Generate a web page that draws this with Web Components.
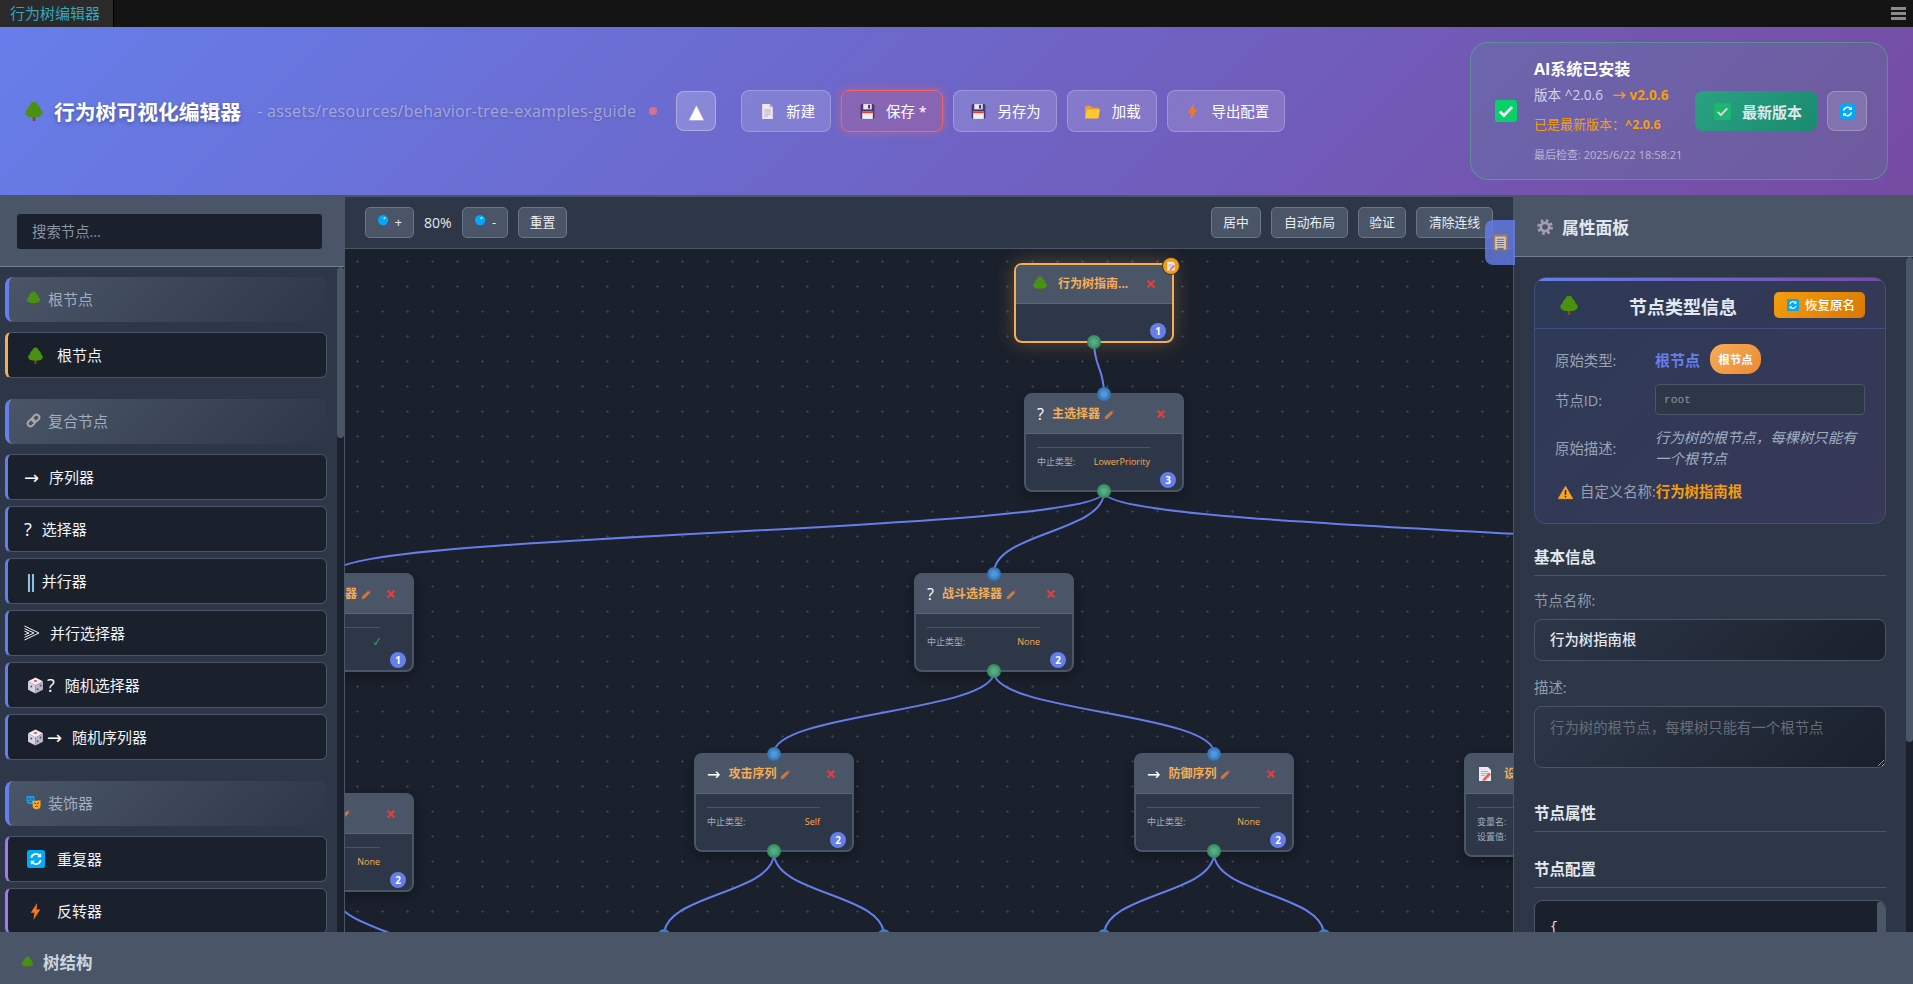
<!DOCTYPE html>
<html lang="zh">
<head>
<meta charset="utf-8">
<title>行为树编辑器</title>
<style>
    html, body {
        margin: 0;
        height: 100%;
        overflow: hidden;
    }

    body {
        display: flex;
        flex-direction: column;
        background: #1a202c;
        color: #e2e8f0;
        font-family: "Open Sans", "Noto Sans CJK SC", sans-serif;
    }
</style>
</head>
<body>

<bt-tabbar></bt-tabbar>

<bt-header>
    <bt-action icon="page">新建</bt-action>
    <bt-action icon="floppy" dirty>保存 *</bt-action>
    <bt-action icon="floppy">另存为</bt-action>
    <bt-action icon="folder">加载</bt-action>
    <bt-action icon="bolt">导出配置</bt-action>
    <bt-ai-status slot="status"></bt-ai-status>
</bt-header>

<bt-workspace>
    <bt-palette>
        <bt-group label="根节点" icon="tree">
            <bt-item accent="#f6ad55"><bt-icon slot="icon" name="tree" size="17" box="23"></bt-icon>根节点</bt-item>
        </bt-group>
        <bt-group label="复合节点" icon="link">
            <bt-item><bt-glyph slot="icon">→</bt-glyph>序列器</bt-item>
            <bt-item><bt-glyph slot="icon">?</bt-glyph>选择器</bt-item>
            <bt-item><bt-glyph slot="icon" style="letter-spacing:-6px">||</bt-glyph>并行器</bt-item>
            <bt-item><bt-icon slot="icon" name="chevrons" size="16"></bt-icon>并行选择器</bt-item>
            <bt-item><bt-icon slot="icon" name="die" size="17" box="23"></bt-icon><bt-glyph slot="icon">?</bt-glyph>随机选择器</bt-item>
            <bt-item><bt-icon slot="icon" name="die" size="17" box="23"></bt-icon><bt-glyph slot="icon">→</bt-glyph>随机序列器</bt-item>
        </bt-group>
        <bt-group label="装饰器" icon="masks">
            <bt-item accent="#9f7aea"><bt-icon slot="icon" name="refresh" size="18" box="23"></bt-icon>重复器</bt-item>
            <bt-item accent="#9f7aea"><bt-icon slot="icon" name="bolt" size="17" box="23"></bt-icon>反转器</bt-item>
        </bt-group>
    </bt-palette>

    <bt-canvas-view>
        <bt-node style="left:-91px;top:324px" name="并行选择器" badge="1" gap="14">
            <bt-icon slot="icon" name="chevrons" size="16"></bt-icon>
            <bt-prop label="成功策略:" value="✓" color="#48bb78"></bt-prop>
        </bt-node>
        <bt-node style="left:-91px;top:544px" name="巡逻序列" badge="2">
            <bt-glyph slot="icon" small>→</bt-glyph>
            <bt-prop label="中止类型:" value="None"></bt-prop>
        </bt-node>
        <bt-node style="left:669px;top:14px" name="行为树指南..." badge="1" root>
            <bt-icon slot="icon" name="tree" size="16"></bt-icon>
        </bt-node>
        <bt-node style="left:679px;top:144px" name="主选择器" badge="3">
            <bt-glyph slot="icon" small>?</bt-glyph>
            <bt-prop label="中止类型:" value="LowerPriority"></bt-prop>
        </bt-node>
        <bt-node style="left:569px;top:324px" name="战斗选择器" badge="2">
            <bt-glyph slot="icon" small>?</bt-glyph>
            <bt-prop label="中止类型:" value="None"></bt-prop>
        </bt-node>
        <bt-node style="left:349px;top:504px" name="攻击序列" badge="2">
            <bt-glyph slot="icon" small>→</bt-glyph>
            <bt-prop label="中止类型:" value="Self"></bt-prop>
        </bt-node>
        <bt-node style="left:789px;top:504px" name="防御序列" badge="2">
            <bt-glyph slot="icon" small>→</bt-glyph>
            <bt-prop label="中止类型:" value="None"></bt-prop>
        </bt-node>
        <bt-node style="left:1119px;top:504px" name="设置变量" badge="0" gap="11">
            <bt-icon slot="icon" name="memo" size="16"></bt-icon>
            <bt-prop label="变量名:" value=""></bt-prop>
            <bt-prop label="设置值:" value=""></bt-prop>
        </bt-node>
    </bt-canvas-view>

    <bt-props></bt-props>
</bt-workspace>

<bt-tree-footer></bt-tree-footer>

<script>
    const ICONS = {
        tree: `<rect x="7" y="12" width="2" height="4" fill="#7a4a2c"/><path transform="translate(8 0) scale(1.120 1) translate(-8 0)" d="M8 .5c1.500 0 2.600 1.400 2.700 2.800 1.300.7 2 2 1.800 3.300 1.300.7 2 2.200 1.500 3.700-.6 1.600-2.200 2.500-6 2.500s-5.400-.9-6-2.500c-.5-1.500.2-3 1.500-3.700C3.300 5.300 4 4 5.300 3.300 5.400 1.900 6.500.5 8 .5z" fill="#4a9112"/>`,
        page: `<path d="M3 1h7l3 3v11H3z" fill="#ece8f0"/><path d="M10 1l3 3h-3z" fill="#bcb4c4"/><path d="M5 6.500h6M5 8.500h6M5 10.500h6M5 12.500h3" stroke="#b5adbe"/>`,
        floppy: `<rect x="1.500" y="1" width="13" height="14" rx="1.500" fill="#46396f"/><rect x="4" y="1" width="8" height="5" fill="#e8e6ee"/><rect x="8.500" y="1.800" width="2" height="3.400" fill="#46396f"/><rect x="3" y="8" width="10" height="7" fill="#f2eff5"/><rect x="3" y="8" width="10" height="1.600" fill="#f03a3a"/>`,
        folder: `<path d="M1 3.500a1 1 0 0 1 1-1h4l2 2h6v9H1z" fill="#e89e3a"/><path d="M2.800 6H15l-1.500 8.500H1z" fill="#ffc832"/>`,
        bolt: `<path d="M9.500 0L3.500 9.200H7L6 16l6.500-9.800H9z" fill="#f7791f"/>`,
        check: `<rect width="16" height="16" rx="2" fill="#07d168"/><path d="M3.500 8.300l3 3 6-6.300" fill="none" stroke="#fff" stroke-width="2"/>`,
        checkdim: `<rect width="16" height="16" rx="2" fill="#1db56f"/><path d="M3.500 8.300l3 3 6-6.300" fill="none" stroke="#cfd8dc" stroke-width="1.800"/>`,
        refresh: `<rect width="16" height="16" rx="2" fill="#03a9f4"/><path d="M3.800 7a4.300 4.300 0 0 1 7.300-2.200M12.200 9a4.300 4.300 0 0 1-7.300 2.200" fill="none" stroke="#fff" stroke-width="1.600"/><path d="M12.600 2.800v3.600H9zM3.400 13.200V9.600H7z" fill="#fff"/>`,
        link: `<g transform="rotate(-45 8 8)" fill="none" stroke="#a9a9a9" stroke-width="2"><rect x=".5" y="5" width="8.500" height="6" rx="3"/><rect x="7" y="5" width="8.500" height="6" rx="3"/></g>`,
        die: `<path d="M8 .5L15 4 8 8 1 4z" fill="#f0eaf3"/><path d="M1 4l7 4v7.500L1 12z" fill="#d8d1de"/><path d="M15 4L8 8v7.500l7-3.500z" fill="#bdb4c8"/><ellipse cx="8" cy="3.800" rx="1.500" ry=".9" fill="#e0485a"/><circle cx="4" cy="9" r=".9" fill="#5c4a86"/><circle cx="10" cy="11.500" r=".9" fill="#5c4a86"/><circle cx="12.800" cy="8" r=".9" fill="#5c4a86"/>`,
        masks: `<path d="M.5 1h8.500v4.500a4.200 4.200 0 0 1-8.500 0z" fill="#1e9be0"/><circle cx="3" cy="4" r=".9" fill="#0b4a78"/><circle cx="6.500" cy="4" r=".9" fill="#0b4a78"/><path d="M3 6.500q1.800 1.500 3.500 0" stroke="#0b4a78" fill="none"/><path d="M7 6.300l8.500-.8v5.500a4.200 4.200 0 0 1-8.500 0z" fill="#f9a825"/><path d="M8.800 8.500l2 .8M13.800 8.300l-2 1M9.800 12.500q1.500-1.500 3 0" stroke="#6b3d00" fill="none"/>`,
        chevrons: `<path d="M.5 1L15 8 .5 15M.5 3.600L10 8 .5 12.400M.5 6.200L5 8 .5 9.800" fill="none" stroke="#f1f4f8"/>`,
        pencil: `<path d="M1.500 11L10.500 2.500l3 3L5 14l-4 1z" fill="#c87a3f"/><path d="M11.500 1.500l1-1 3 3-1 1z" fill="#d6336c"/>`,
        cross: `<path d="M2.500 2.500l11 11M13.500 2.500l-11 11" stroke="#e53e3e" stroke-width="3.400"/>`,
        gear: `<circle cx="8" cy="8" r="6.400" fill="none" stroke="#a79cb2" stroke-width="3" stroke-dasharray="2.500 2.530"/><circle cx="8" cy="8" r="4.200" fill="none" stroke="#a79cb2" stroke-width="2.800"/>`,
        warning: `<path d="M8 1.500L15.500 14.500H.5z" fill="#f6a623" stroke="#f6a623" stroke-linejoin="round"/><rect x="7.200" y="5.500" width="1.600" height="5" fill="#222"/><circle cx="8" cy="12.300" r=".9" fill="#222"/>`,
        clipboard: `<rect x="1.500" y=".5" width="13" height="15" rx=".8" fill="#ad7a4e"/><rect x="3" y="2.500" width="10" height="12" fill="#c9c9cf"/><path d="M4.500 5h7M4.500 7h7M4.500 9h7M4.500 11h7" stroke="#6f6f78"/><rect x="5" y="13" width="6" height="2.500" fill="#6f6f78"/>`,
        memo: `<path d="M2 1h9l3 3v11H2z" fill="#ece8f0"/><path d="M4 5.500h7M4 7.500h7M4 9.500h4" stroke="#b5adbe"/><path d="M6 13l6-6.500 2 2-6 6-2.500.5z" fill="#e8604c"/>`,
        lens: `<path d="M10 10l4.500 4.500" stroke="#5b4a8f" stroke-width="2.600"/><circle cx="6.500" cy="6.500" r="5.500" fill="#03a9f4"/><circle cx="8" cy="4.500" r="1.200" fill="#a8e4ff"/>`
    };

    class BtIcon extends HTMLElement {
        connectedCallback() {
            if (this.shadowRoot) return;
            this.attachShadow({ mode: 'open' });
            const size = this.getAttribute('size') || 16;
            const box = this.getAttribute('box') || size;
            this.shadowRoot.innerHTML = `
            <style>
                :host {
                    display: inline-flex;
                    align-items: center;
                    justify-content: center;
                    flex: none;
                    width: ${box}px;
                    height: ${size}px;
                }
                svg { display: block; }
            </style>
            <svg width="${size}" height="${size}" viewBox="0 0 16 16">${ICONS[this.getAttribute('name')] || ''}</svg>`;
        }
    }

    class BtGlyph extends HTMLElement {
        constructor() {
            super();
            this.attachShadow({ mode: 'open' });
            this.shadowRoot.innerHTML = `
            <style>
                :host {
                    display: inline-block;
                    font-size: 18px;
                    line-height: 20px;
                    font-family: "Open Sans", "DejaVu Sans", sans-serif;
                    color: #fff;
                }
                :host([small]) {
                    font-size: 16px;
                }
            </style>
            <slot></slot>`;
        }
    }

    // headless screenshots drop native scrollbars, so the bar is drawn
    class BtScrollbar extends HTMLElement {
        connectedCallback() {
            if (this.shadowRoot) return;
            this.attachShadow({ mode: 'open' });
            this.shadowRoot.innerHTML = `
            <style>
                :host {
                    display: block;
                    flex: none;
                    width: ${this.getAttribute('size') || 7}px;
                    background: ${this.getAttribute('track') || '#1a202c'};
                }
                div {
                    height: ${this.getAttribute('thumb')}px;
                    border-radius: 4px;
                    background: #4a5568;
                }
            </style>
            <div></div>`;
        }
    }

    class BtTabbar extends HTMLElement {
        constructor() {
            super();
            this.attachShadow({ mode: 'open' });
            this.shadowRoot.innerHTML = `
            <style>
                :host {
                    display: flex;
                    justify-content: space-between;
                    flex: none;
                    height: 27px;
                    background: #141414;
                }
                .tab {
                    padding: 0 13px 0 10px;
                    background: #2a2a2a;
                    border-right: 1px solid #000;
                    color: #3aa3bd;
                    font-size: 15px;
                    line-height: 26px;
                }
                .menu {
                    display: flex;
                    flex-direction: column;
                    justify-content: center;
                    gap: 2px;
                    width: 15px;
                    margin-right: 7px;
                }
                .menu i {
                    display: block;
                    height: 3px;
                    background: #8a8a8a;
                }
            </style>
            <div class="tab">行为树编辑器</div>
            <div class="menu"><i></i><i></i><i></i></div>`;
        }
    }

    class BtHeader extends HTMLElement {
        constructor() {
            super();
            this.attachShadow({ mode: 'open' });
            this.shadowRoot.innerHTML = `
            <style>
                :host {
                    display: flex;
                    align-items: center;
                    flex: none;
                    height: 170px;
                    padding: 0 25px 0 24px;
                    box-sizing: border-box;
                    background: linear-gradient(135deg, #667eea 0%, #764ba2 100%);
                    border-bottom: 2px solid #4a5568;
                }
                .brand {
                    display: flex;
                    align-items: center;
                    gap: 10px;
                    font-size: 20.800px;
                    font-weight: 700;
                    color: #fff;
                    text-shadow: 0 2px 4px rgba(0, 0, 0, .3);
                }
                .path {
                    margin-left: 16px;
                    font-size: 16px;
                    letter-spacing: .3px;
                    color: rgba(255, 255, 255, .42);
                    text-shadow: 0 1px 3px rgba(0, 0, 0, .2);
                    white-space: nowrap;
                }
                .dot {
                    flex: none;
                    width: 8px;
                    height: 8px;
                    margin-left: 13px;
                    border-radius: 50%;
                    background: #d9708f;
                }
                .collapse {
                    display: flex;
                    align-items: center;
                    justify-content: center;
                    flex: none;
                    width: 40px;
                    height: 40px;
                    margin: 0 25px 0 19px;
                    box-sizing: border-box;
                    border: 1px solid rgba(255, 255, 255, .3);
                    border-radius: 8px;
                    background: rgba(255, 255, 255, .2);
                    color: #fff;
                    font: 19px "DejaVu Sans", sans-serif;
                }
                .actions {
                    display: flex;
                    gap: 10px;
                }
                ::slotted(bt-ai-status) {
                    margin-left: auto;
                }
            </style>
            <div class="brand"><bt-icon name="tree" size="20"></bt-icon>行为树可视化编辑器</div>
            <div class="path">- assets/resources/behavior-tree-examples-guide</div>
            <div class="dot"></div>
            <div class="collapse">▲</div>
            <div class="actions"><slot></slot></div>
            <slot name="status"></slot>`;
        }
    }

    class BtAction extends HTMLElement {
        connectedCallback() {
            if (this.shadowRoot) return;
            this.attachShadow({ mode: 'open' });
            this.shadowRoot.innerHTML = `
            <style>
                :host {
                    display: flex;
                    align-items: center;
                    gap: 10px;
                    height: 42px;
                    padding: 0 15px 2px 16px;
                    box-sizing: border-box;
                    border: 1px solid rgba(255, 255, 255, .22);
                    border-radius: 8px;
                    background: rgba(255, 255, 255, .15);
                    color: #fff;
                    font-size: 14.400px;
                    white-space: nowrap;
                }
                :host([dirty]) {
                    border-color: #f56565;
                    background: rgba(245, 101, 101, .2);
                    box-shadow: 0 0 10px rgba(245, 101, 101, .5);
                }
                bt-icon { margin-top: 3px; }
            </style>
            <bt-icon name="${this.getAttribute('icon')}" size="17" box="18"></bt-icon>
            <slot></slot>`;
        }
    }

    class BtAiStatus extends HTMLElement {
        constructor() {
            super();
            this.attachShadow({ mode: 'open' });
            this.shadowRoot.innerHTML = `
            <style>
                :host {
                    display: flex;
                    align-items: center;
                    width: 418px;
                    height: 138px;
                    padding: 0 20px 0 24px;
                    box-sizing: border-box;
                    border: 1px solid rgba(72, 187, 120, .55);
                    border-radius: 18px;
                    background: rgba(72, 187, 120, .13);
                }
                .info {
                    flex: 1;
                    margin-left: 17px;
                    padding-top: 2px;
                    font-size: 13.600px;
                    line-height: 20px;
                    color: rgba(255, 255, 255, .72);
                    white-space: nowrap;
                }
                .title {
                    margin-bottom: 6px;
                    font-size: 16px;
                    font-weight: 700;
                    color: #fff;
                }
                .new {
                    margin-left: 6px;
                    color: #f59e0b;
                    font-weight: 700;
                }
                .latest {
                    margin: 9px 0 10px;
                    font-size: 13px;
                    color: #f59e0b;
                }
                .latest b {
                    font-size: 12.500px;
                    font-weight: 700;
                }
                .checked {
                    font-size: 11px;
                    color: rgba(255, 255, 255, .55);
                }
                .update {
                    display: flex;
                    align-items: center;
                    justify-content: center;
                    gap: 11px;
                    width: 122px;
                    height: 40px;
                    padding-left: 4px;
                    box-sizing: border-box;
                    border-radius: 8px;
                    background: linear-gradient(135deg, #2aa382, #198a70);
                    color: #dfe7ea;
                    font-size: 15px;
                    font-weight: 700;
                }
                .retry {
                    display: flex;
                    align-items: center;
                    justify-content: center;
                    width: 40px;
                    height: 40px;
                    margin-left: 10px;
                    box-sizing: border-box;
                    border: 1px solid rgba(255, 255, 255, .22);
                    border-radius: 8px;
                    background: rgba(255, 255, 255, .14);
                }
            </style>
            <bt-icon name="check" size="22"></bt-icon>
            <div class="info">
                <div class="title">AI系统已安装</div>
                <div>版本 ^2.0.6 <span class="new">→ v2.0.6</span></div>
                <div class="latest">已是最新版本：<b>^2.0.6</b></div>
                <div class="checked">最后检查: 2025/6/22 18:58:21</div>
            </div>
            <div class="update"><bt-icon name="checkdim" size="17"></bt-icon>最新版本</div>
            <div class="retry"><bt-icon name="refresh" size="15"></bt-icon></div>`;
        }
    }

    class BtWorkspace extends HTMLElement {
        constructor() {
            super();
            this.attachShadow({ mode: 'open' });
            this.shadowRoot.innerHTML = `
            <style>
                :host {
                    display: flex;
                    flex: 1;
                    min-height: 0;
                    overflow: hidden;
                }
            </style>
            <slot></slot>`;
        }
    }

    class BtPalette extends HTMLElement {
        constructor() {
            super();
            this.attachShadow({ mode: 'open' });
            this.shadowRoot.innerHTML = `
            <style>
                :host {
                    display: flex;
                    flex-direction: column;
                    flex: none;
                    width: 345px;
                    box-sizing: border-box;
                    border-right: 1px solid #4a5568;
                    background: #2d3748;
                }
                .search {
                    flex: none;
                    height: 70px;
                    padding: 16px 21px 0 16px;
                    box-sizing: border-box;
                    background: #4a5568;
                    border-bottom: 1px solid #718096;
                }
                input {
                    display: block;
                    width: 100%;
                    height: 37px;
                    padding: 0 15px;
                    box-sizing: border-box;
                    border: 1px solid #4a5568;
                    border-radius: 4px;
                    outline: none;
                    background: #1a202c;
                    color: #e2e8f0;
                    font: 14.400px "Open Sans", "Noto Sans CJK SC", sans-serif;
                }
                input::placeholder { color: #8a94a5; opacity: 1; }
                .list {
                    display: flex;
                    flex: 1;
                    min-height: 0;
                }
                .inner {
                    flex: 1;
                    min-width: 0;
                    overflow: hidden;
                    padding: 10px 10px 0 5px;
                }
            </style>
            <div class="search"><input placeholder="搜索节点..."></div>
            <div class="list">
                <div class="inner"><slot></slot></div>
                <bt-scrollbar thumb="171"></bt-scrollbar>
            </div>`;
        }
    }

    class BtGroup extends HTMLElement {
        connectedCallback() {
            if (this.shadowRoot) return;
            this.attachShadow({ mode: 'open' });
            this.shadowRoot.innerHTML = `
            <style>
                :host {
                    display: block;
                    margin-bottom: 21px;
                }
                .title {
                    display: flex;
                    align-items: center;
                    gap: 4px;
                    height: 45px;
                    margin-bottom: 10px;
                    padding: 0 0 2px 14px;
                    box-sizing: border-box;
                    border-left: 4px solid #667eea;
                    border-radius: 8px;
                    background: linear-gradient(135deg, #4a5568, #2d3748);
                    color: #a0aec0;
                    font-size: 15px;
                }
                .items {
                    display: flex;
                    flex-direction: column;
                    gap: 6px;
                }
            </style>
            <div class="title"><bt-icon name="${this.getAttribute('icon')}" size="15" box="21"></bt-icon>${this.getAttribute('label')}</div>
            <div class="items"><slot></slot></div>`;
        }
    }

    class BtItem extends HTMLElement {
        connectedCallback() {
            if (this.shadowRoot) return;
            this.attachShadow({ mode: 'open' });
            this.shadowRoot.innerHTML = `
            <style>
                :host {
                    display: flex;
                    align-items: center;
                    height: 46px;
                    padding: 0 0 2px 16px;
                    box-sizing: border-box;
                    border: 1px solid #4a5568;
                    border-left: 3px solid ${this.getAttribute('accent') || '#667eea'};
                    border-radius: 6px;
                    background: #1a202c;
                    color: #f1f4f8;
                    font-size: 15px;
                }
                .icon {
                    display: flex;
                    align-items: center;
                    margin: 2px 10px 0 0;
                }
            </style>
            <span class="icon"><slot name="icon"></slot></span>
            <slot></slot>`;
        }
    }

    class BtCanvasView extends HTMLElement {
        constructor() {
            super();
            this.attachShadow({ mode: 'open' });
            this.shadowRoot.innerHTML = `
            <style>
                :host {
                    display: flex;
                    flex-direction: column;
                    flex: 1;
                    min-width: 0;
                    position: relative;
                }
                .toolbar {
                    display: flex;
                    align-items: center;
                    flex: none;
                    gap: 10px;
                    height: 52px;
                    padding: 0 20px;
                    box-sizing: border-box;
                    background: #2d3748;
                    border-bottom: 1px solid #4a5568;
                }
                .zoom {
                    width: 28px;
                    color: #e2e8f0;
                    font-size: 14px;
                    white-space: nowrap;
                }
                .spacer { flex: 1; }
                .canvas {
                    position: relative;
                    flex: 1;
                    overflow: hidden;
                    background: #1a202c;
                }
                svg.graph {
                    position: absolute;
                    inset: 0;
                    width: 100%;
                    height: 100%;
                }
                .graph path.wire {
                    fill: none;
                    stroke: #667eea;
                    stroke-width: 2;
                }
                .dock {
                    position: absolute;
                    right: -2px;
                    top: 23px;
                    z-index: 5;
                    display: flex;
                    align-items: center;
                    justify-content: center;
                    width: 30px;
                    height: 45px;
                    border-radius: 8px 0 0 8px;
                    background: rgba(102, 126, 234, .8);
                }
            </style>
            <div class="toolbar">
                <bt-tool style="width:49px"><bt-icon name="lens" size="15"></bt-icon>+</bt-tool>
                <span class="zoom">80%</span>
                <bt-tool style="width:46px"><bt-icon name="lens" size="15"></bt-icon>-</bt-tool>
                <bt-tool style="width:49px">重置</bt-tool>
                <span class="spacer"></span>
                <bt-tool style="width:50px">居中</bt-tool>
                <bt-tool style="width:77px">自动布局</bt-tool>
                <bt-tool style="width:48px">验证</bt-tool>
                <bt-tool style="width:77px">清除连线</bt-tool>
            </div>
            <div class="canvas">
                <svg class="graph" viewBox="345 249 1168 683" preserveAspectRatio="xMinYMin slice">
                    <defs>
                        <pattern id="dots" x="0" y="0" width="25" height="25" patternUnits="userSpaceOnUse">
                            <path d="M7.500 10v3M6 11.500h3" stroke="#363f4e" shape-rendering="crispEdges"/>
                        </pattern>
                    </defs>
                    <rect x="345" y="249" width="1168" height="683" fill="url(#dots)"/>
                    <path class="wire" d="M1094 342C1094 367 1104 368 1104 394"/>
                    <path class="wire" d="M1104 492C1104 532 334 533 334 573"/>
                    <path class="wire" d="M1104 492C1104 532 994 533 994 573"/>
                    <path class="wire" d="M1104 492C1104 532 1874 533 1874 573"/>
                    <path class="wire" d="M994 672C994 712 774 713 774 753"/>
                    <path class="wire" d="M994 672C994 712 1214 713 1214 753"/>
                    <path class="wire" d="M334 892C334 932 442 933 442 973"/>
                    <path class="wire" d="M774 853C774 894 664 894 664 935"/>
                    <path class="wire" d="M774 853C774 894 884 894 884 935"/>
                    <path class="wire" d="M1214 853C1214 894 1104 894 1104 935"/>
                    <path class="wire" d="M1214 853C1214 894 1324 894 1324 935"/>
                    <circle cx="664" cy="935" r="6" fill="#3182ce"/>
                    <circle cx="884" cy="935" r="6" fill="#3182ce"/>
                    <circle cx="1104" cy="935" r="6" fill="#3182ce"/>
                    <circle cx="1324" cy="935" r="6" fill="#3182ce"/>
                </svg>
                <slot></slot>
            </div>
            <div class="dock"><bt-icon name="clipboard" size="17"></bt-icon></div>`;
        }
    }

    class BtTool extends HTMLElement {
        constructor() {
            super();
            this.attachShadow({ mode: 'open' });
            this.shadowRoot.innerHTML = `
            <style>
                :host {
                    display: flex;
                    align-items: center;
                    justify-content: center;
                    gap: 3px;
                    height: 31px;
                    padding-bottom: 2px;
                    box-sizing: border-box;
                    border: 1px solid #6b7688;
                    border-radius: 5px;
                    background: #4a5568;
                    color: #e9edf2;
                    font-size: 12.800px;
                    white-space: nowrap;
                }
            </style>
            <slot></slot>`;
        }
    }

    class BtNode extends HTMLElement {
        connectedCallback() {
            if (this.shadowRoot) return;
            this.attachShadow({ mode: 'open' });
            const badge = this.getAttribute('badge');
            this.shadowRoot.innerHTML = `
            <style>
                :host {
                    position: absolute;
                    width: 160px;
                    box-sizing: border-box;
                    border: 2px solid #4a5568;
                    border-radius: 8px;
                    background: #2d3748;
                    box-shadow: 0 4px 12px rgba(0, 0, 0, .3);
                }
                :host([root]) {
                    border-color: #f6ad55;
                    box-shadow: 0 0 20px rgba(246, 173, 85, .3);
                }
                .head {
                    display: flex;
                    align-items: center;
                    height: 39px;
                    padding-left: 11px;
                    box-sizing: border-box;
                    background: #4a5568;
                    border-bottom: 1px solid #5a6679;
                    border-radius: 5px 5px 0 0;
                }
                :host([root]) .head { padding-left: 16px; }
                .name {
                    margin-left: 8px;
                    padding-bottom: 2px;
                    color: #f6ad55;
                    font-size: 12px;
                    font-weight: 700;
                    white-space: nowrap;
                }
                :host([root]) .name { margin-left: 10px; }
                .pencil { margin-left: 4px; }
                .close { margin-left: auto; margin-right: 16px; }
                .body {
                    min-height: 56px;
                    padding: 13px 32px 11px 11px;
                    box-sizing: border-box;
                }
                :host([root]) .body { min-height: 37px; padding: 0; }
                .rows {
                    padding-top: 6px;
                    border-top: 1px solid #4a5568;
                }
                :host([root]) .rows { display: none; }
                .badge {
                    position: absolute;
                    right: 6px;
                    bottom: 2px;
                    width: 16px;
                    height: 16px;
                    border-radius: 50%;
                    background: #667eea;
                    color: #fff;
                    font-size: 10px;
                    font-weight: 700;
                    line-height: 16px;
                    text-align: center;
                }
                .port {
                    position: absolute;
                    left: 71px;
                    width: 14px;
                    height: 14px;
                    border-radius: 50%;
                }
                .in {
                    top: -8px;
                    background: radial-gradient(circle, #5298da 20%, #2c6fb0 70%, #243f63 100%);
                }
                .out {
                    bottom: -8px;
                    background: radial-gradient(circle, #58ab86 20%, #2f8a5c 70%, #24533f 100%);
                }
                :host([root]) .in { display: none; }
                .stamp {
                    position: absolute;
                    right: -7px;
                    top: -7px;
                    display: none;
                    align-items: center;
                    justify-content: center;
                    width: 16px;
                    height: 16px;
                    border-radius: 50%;
                    background: #f59e0b;
                    box-shadow: 0 0 0 1px #2d3748;
                }
                :host([root]) .stamp { display: flex; }
            </style>
            <div class="head">
                <slot name="icon"></slot>
                <span class="name" style="${this.hasAttribute('gap') ? 'margin-left:' + this.getAttribute('gap') + 'px' : ''}">${this.getAttribute('name')}</span>
                ${this.hasAttribute('root') ? '' : '<bt-icon class="pencil" name="pencil" size="11"></bt-icon>'}
                <bt-icon class="close" name="cross" size="10"></bt-icon>
            </div>
            <div class="body"><div class="rows"><slot></slot></div></div>
            ${badge !== '0' ? `<div class="badge">${badge}</div>` : ''}
            <div class="port in"></div>
            <div class="port out"></div>
            <div class="stamp"><bt-icon name="memo" size="10"></bt-icon></div>`;
        }
    }

    class BtProp extends HTMLElement {
        connectedCallback() {
            if (this.shadowRoot) return;
            this.attachShadow({ mode: 'open' });
            this.shadowRoot.innerHTML = `
            <style>
                :host {
                    display: flex;
                    justify-content: space-between;
                    font-size: 9px;
                    line-height: 15px;
                    color: #a0aec0;
                }
                b {
                    font-weight: 400;
                    color: ${this.getAttribute('color') || '#f6ad55'};
                }
            </style>
            <span>${this.getAttribute('label')}</span><b>${this.getAttribute('value')}</b>`;
        }
    }

    class BtProps extends HTMLElement {
        constructor() {
            super();
            this.attachShadow({ mode: 'open' });
            this.shadowRoot.innerHTML = `
            <style>
                :host {
                    display: flex;
                    flex-direction: column;
                    flex: none;
                    width: 400px;
                    box-sizing: border-box;
                    border-left: 1px solid #4a5568;
                    background: #2d3748;
                }
                .head {
                    display: flex;
                    align-items: center;
                    gap: 9px;
                    flex: none;
                    height: 60px;
                    padding-left: 23px;
                    box-sizing: border-box;
                    background: #4a5568;
                    border-bottom: 1px solid #718096;
                    color: #e2e8f0;
                    font-size: 16.800px;
                    font-weight: 700;
                }
                .scroll {
                    display: flex;
                    flex: 1;
                    min-height: 0;
                }
                .inner {
                    flex: 1;
                    min-width: 0;
                    overflow: hidden;
                    padding: 20px 20px 0;
                }
                label {
                    display: block;
                    height: 20px;
                    margin: 15px 0 8px;
                    color: #8f9bab;
                    font-size: 14.400px;
                    line-height: 20px;
                }
                .field {
                    display: block;
                    width: 100%;
                    padding: 0 15px;
                    box-sizing: border-box;
                    border: 1px solid #4a5568;
                    border-radius: 8px;
                    outline: none;
                    background: linear-gradient(135deg, #2d3748, #1a202c);
                    color: #e2e8f0;
                    font: 14.400px "Open Sans", "Noto Sans CJK SC", sans-serif;
                }
                input.field {
                    height: 42px;
                    padding-bottom: 3px;
                    font-weight: 500;
                }
                textarea.field {
                    height: 62px;
                    padding-top: 11px;
                    line-height: 20px;
                }
                textarea.field::placeholder { color: #666d78; opacity: 1; }
                .code {
                    display: flex;
                    height: 200px;
                    margin-top: 12px;
                    box-sizing: border-box;
                    overflow: hidden;
                    border: 1px solid #4a5568;
                    border-radius: 8px;
                    background: #1a202c;
                    color: #e2e8f0;
                    font: 13px/20px "Liberation Mono", monospace;
                }
                pre {
                    flex: 1;
                    margin: 0;
                    padding: 16px 15px;
                    font: inherit;
                }
            </style>
            <div class="head"><bt-icon name="gear" size="16"></bt-icon>属性面板</div>
            <div class="scroll">
                <div class="inner">
                    <bt-type-card></bt-type-card>
                    <bt-section top="0">基本信息</bt-section>
                    <label>节点名称:</label>
                    <input class="field" value="行为树指南根">
                    <label style="margin-top:17px">描述:</label>
                    <textarea class="field" placeholder="行为树的根节点，每棵树只能有一个根节点"></textarea>
                    <bt-section top="35">节点属性</bt-section>
                    <bt-section top="27">节点配置</bt-section>
                    <div class="code"><pre>{
  "type": "root",
  "name": "行为树指南根"
}</pre><bt-scrollbar size="8" thumb="120" track="#1a202c"></bt-scrollbar></div>
                </div>
                <bt-scrollbar thumb="485"></bt-scrollbar>
            </div>`;
        }
    }

    class BtSection extends HTMLElement {
        connectedCallback() {
            if (this.shadowRoot) return;
            this.attachShadow({ mode: 'open' });
            this.shadowRoot.innerHTML = `
            <style>
                :host {
                    display: block;
                    margin-top: ${this.getAttribute('top')}px;
                    padding-bottom: 8px;
                    border-bottom: 1px solid #4a5568;
                    color: #e2e8f0;
                    font-size: 15.500px;
                    font-weight: 700;
                    line-height: 20px;
                }
            </style>
            <slot></slot>`;
        }
    }

    class BtTypeCard extends HTMLElement {
        constructor() {
            super();
            this.attachShadow({ mode: 'open' });
            this.shadowRoot.innerHTML = `
            <style>
                :host {
                    display: block;
                    height: 247px;
                    margin-bottom: 23px;
                    box-sizing: border-box;
                    overflow: hidden;
                    border: 1px solid #414f7e;
                    border-radius: 12px;
                    background: linear-gradient(135deg, #2d3a55, #383858);
                }
                .stripe {
                    height: 3px;
                    background: linear-gradient(90deg, #667eea, #764ba2);
                }
                .head {
                    display: flex;
                    align-items: center;
                    height: 48px;
                    padding: 0 20px;
                    box-sizing: border-box;
                    border-bottom: 1px solid #414f7e;
                }
                .title {
                    flex: 1;
                    margin-left: 46px;
                    padding-top: 3px;
                    color: #e2e8f0;
                    font-size: 18px;
                    font-weight: 700;
                }
                .restore {
                    display: flex;
                    align-items: center;
                    gap: 6px;
                    width: 91px;
                    height: 26px;
                    padding-left: 13px;
                    box-sizing: border-box;
                    border-radius: 5px;
                    background: linear-gradient(135deg, #f59e0b, #d97706);
                    color: #fff;
                    font-size: 12.500px;
                    font-weight: 500;
                    white-space: nowrap;
                }
                .body {
                    display: grid;
                    grid-template-columns: 100px 1fr;
                    align-items: center;
                    gap: 10px 0;
                    padding: 15px 20px 0;
                    color: #97a3b4;
                    font-size: 14.400px;
                }
                .type {
                    display: flex;
                    align-items: center;
                    gap: 10px;
                    color: #667eea;
                    font-size: 15px;
                    font-weight: 700;
                }
                .pill {
                    display: flex;
                    align-items: center;
                    justify-content: center;
                    width: 51px;
                    height: 30px;
                    border-radius: 14px;
                    background: linear-gradient(135deg, #f6ad55, #ed8936);
                    color: #fff;
                    font-size: 11.500px;
                    font-weight: 700;
                }
                .id {
                    height: 31px;
                    padding-left: 8px;
                    box-sizing: border-box;
                    border: 1px solid #4a5568;
                    border-radius: 4px;
                    background: #2d3748;
                    color: #8a94a3;
                    font: 11.200px/31px "Liberation Mono", monospace;
                }
                .desc {
                    margin-top: 2px;
                    color: #a0aec0;
                    font-style: italic;
                    line-height: 21px;
                }
                .custom {
                    display: flex;
                    align-items: center;
                    gap: 7px;
                    margin: 13px 0 0 23px;
                    color: #97a3b4;
                    font-size: 14.400px;
                    line-height: 20px;
                }
                .custom b {
                    margin-left: -7px;
                    color: #f59e0b;
                }
            </style>
            <div class="stripe"></div>
            <div class="head">
                <bt-icon name="tree" size="20" box="28"></bt-icon>
                <div class="title">节点类型信息</div>
                <div class="restore"><bt-icon name="refresh" size="12"></bt-icon>恢复原名</div>
            </div>
            <div class="body">
                <span>原始类型:</span>
                <div class="type">根节点<span class="pill">根节点</span></div>
                <span>节点ID:</span>
                <div class="id">root</div>
                <span>原始描述:</span>
                <div class="desc">行为树的根节点，每棵树只能有一个根节点</div>
            </div>
            <div class="custom"><bt-icon name="warning" size="15"></bt-icon>自定义名称:<b>行为树指南根</b></div>`;
        }
    }

    class BtTreeFooter extends HTMLElement {
        constructor() {
            super();
            this.attachShadow({ mode: 'open' });
            this.shadowRoot.innerHTML = `
            <style>
                :host {
                    display: flex;
                    align-items: center;
                    gap: 9px;
                    flex: none;
                    height: 52px;
                    padding: 8px 0 0 21px;
                    box-sizing: border-box;
                    background: #4a5568;
                    color: #cbd5e0;
                    font-size: 16.500px;
                    font-weight: 700;
                }
            </style>
            <bt-icon name="tree" size="13"></bt-icon>树结构`;
        }
    }

    customElements.define('bt-icon', BtIcon);
    customElements.define('bt-glyph', BtGlyph);
    customElements.define('bt-scrollbar', BtScrollbar);
    customElements.define('bt-tabbar', BtTabbar);
    customElements.define('bt-header', BtHeader);
    customElements.define('bt-action', BtAction);
    customElements.define('bt-ai-status', BtAiStatus);
    customElements.define('bt-workspace', BtWorkspace);
    customElements.define('bt-palette', BtPalette);
    customElements.define('bt-group', BtGroup);
    customElements.define('bt-item', BtItem);
    customElements.define('bt-canvas-view', BtCanvasView);
    customElements.define('bt-tool', BtTool);
    customElements.define('bt-node', BtNode);
    customElements.define('bt-prop', BtProp);
    customElements.define('bt-props', BtProps);
    customElements.define('bt-section', BtSection);
    customElements.define('bt-type-card', BtTypeCard);
    customElements.define('bt-tree-footer', BtTreeFooter);
</script>
</body>
</html>
